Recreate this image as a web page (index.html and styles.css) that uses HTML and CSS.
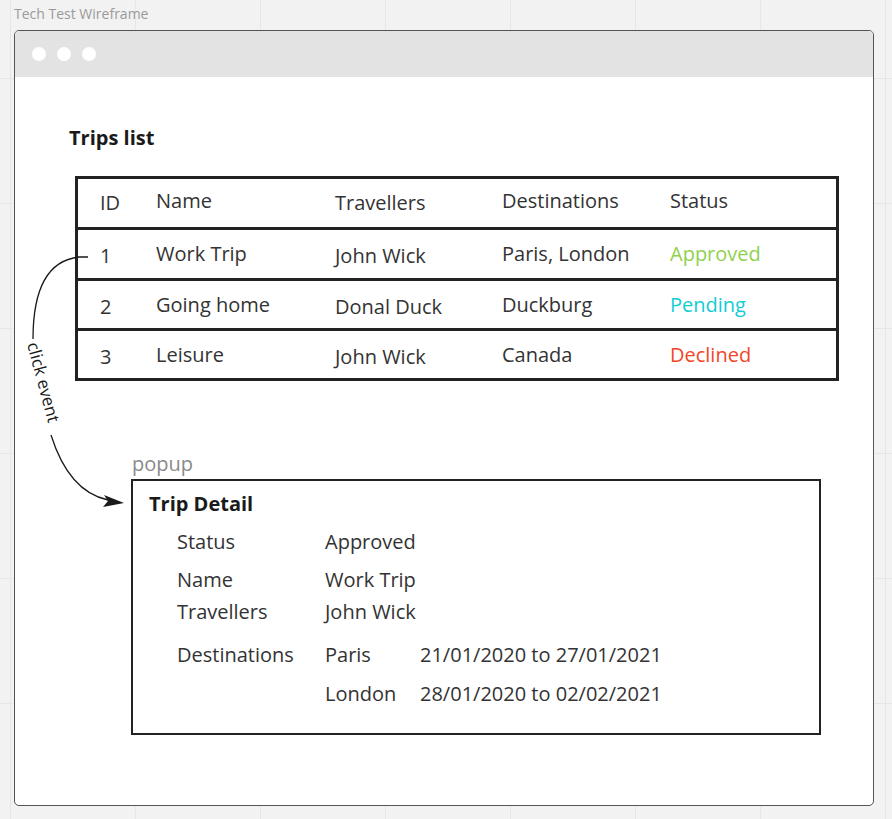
FILE: index.html
```html
<!DOCTYPE html>
<html lang="en">
<head>
    <meta charset="UTF-8">
    <title>Tech Test Wireframe</title>
    <link rel="stylesheet" href="styles.css">
</head>
<body>
    <div class="board-title">Tech Test Wireframe</div>

    <div class="window">
        <div class="title-bar">
            <span class="dot"></span>
            <span class="dot"></span>
            <span class="dot"></span>
        </div>

        <div class="window-body">
            <h1>Trips list</h1>

            <div class="trips">
                <div class="trip-row head">
                    <span class="low">ID</span>
                    <span>Name</span>
                    <span class="low">Travellers</span>
                    <span>Destinations</span>
                    <span>Status</span>
                </div>
                <div class="trip-row">
                    <span class="low">1</span>
                    <span>Work Trip</span>
                    <span class="low">John Wick</span>
                    <span>Paris, London</span>
                    <span class="approved">Approved</span>
                </div>
                <div class="trip-row short">
                    <span class="low">2</span>
                    <span>Going home</span>
                    <span class="low">Donal Duck</span>
                    <span>Duckburg</span>
                    <span class="pending">Pending</span>
                </div>
                <div class="trip-row short">
                    <span class="low">3</span>
                    <span>Leisure</span>
                    <span class="low">John Wick</span>
                    <span>Canada</span>
                    <span class="declined">Declined</span>
                </div>
            </div>

            <div class="popup-label">popup</div>
            <div class="popup">
                <h2>Trip Detail</h2>
                <div class="detail-row first">
                    <span>Status</span>
                    <span>Approved</span>
                </div>
                <div class="detail-row">
                    <span>Name</span>
                    <span>Work Trip</span>
                </div>
                <div class="detail-row tight">
                    <span>Travellers</span>
                    <span>John Wick</span>
                </div>
                <div class="detail-row wide">
                    <span>Destinations</span>
                    <span>Paris</span>
                    <span>21/01/2020 to 27/01/2021</span>
                </div>
                <div class="detail-row">
                    <span></span>
                    <span>London</span>
                    <span>28/01/2020 to 02/02/2021</span>
                </div>
            </div>
        </div>
    </div>

    <!-- connector drawn over the board -->
    <svg class="connector" width="892" height="819" viewBox="0 0 892 819">
        <path d="M88 257 L79 257 C52 260 33 282 33 339" fill="none" stroke="#1a1a1a" stroke-width="1.3"/>
        <text x="0" y="0" transform="translate(27 344) rotate(75)" font-family="Open Sans, sans-serif" font-size="17" fill="#1a1a1a">click event</text>
        <path d="M51 435 C62 470 80 494 108 500" fill="none" stroke="#1a1a1a" stroke-width="1.3"/>
        <path d="M124 503 L104 495 L108 501 L103 507 Z" fill="#1a1a1a"/>
    </svg>
</body>
</html>
```

FILE: styles.css
```css
* {
    margin: 0;
    padding: 0;
    box-sizing: border-box;
}

body {
    font-family: "Open Sans", "Liberation Sans", sans-serif;
    color: #333333;
    background-color: #f2f2f2;
    background-image:
        linear-gradient(to right, #e6e6e6 1px, transparent 1px),
        linear-gradient(to bottom, #e6e6e6 1px, transparent 1px);
    background-size: 125px 125px;
    background-position: 10px 78px;
    width: 892px;
    height: 819px;
    overflow: hidden;
    position: relative;
}

.board-title {
    font-size: 14px;
    line-height: 18px;
    color: #9a9a9a;
    padding: 5px 0 0 14px;
    height: 30px;
}

.window {
    margin-left: 14px;
    width: 860px;
    height: 776px;
    background: #ffffff;
    border: 1.5px solid #555555;
    border-radius: 5px;
    overflow: hidden;
}

.title-bar {
    height: 46px;
    background: #e3e3e3;
    display: flex;
    align-items: center;
    gap: 11px;
    padding-left: 17px;
}

.dot {
    width: 14px;
    height: 14px;
    border-radius: 50%;
    background: #ffffff;
}

.window-body {
    padding: 47px 0 0 0;
}

h1 {
    font-size: 20px;
    font-weight: 700;
    line-height: 28px;
    color: #1a1a1a;
    margin-left: 54px;
    margin-bottom: 24px;
}

/* Trips table */
.trips {
    margin-left: 60px;
    width: 764px;
    border: 3px solid #222222;
    border-bottom: none;
}

.trip-row {
    display: grid;
    grid-template-columns: 55px 179px 167px 168px 1fr;
    align-items: center;
    height: 51px;
    padding-left: 22px;
    border-bottom: 3px solid #222222;
    font-size: 20px;
    line-height: 28px;
}

.trip-row.head {
    padding-bottom: 4px;
}

.trip-row.short {
    height: 50px;
}

.trip-row span:nth-child(n+2) {
    padding-left: 1px;
}

.trip-row .low {
    padding-top: 4px;
}

.approved { color: #8fd14f; }
.pending { color: #12cdd4; }
.declined { color: #f24726; }

/* Popup */
.popup-label {
    margin: 69px 0 1px 117px;
    font-size: 20px;
    line-height: 28px;
    color: #8a8a8a;
}

.popup {
    margin-left: 116px;
    width: 690px;
    height: 256px;
    border: 2px solid #222222;
    padding: 9px 0 0 16px;
}

h2 {
    font-size: 20px;
    font-weight: 700;
    line-height: 28px;
    color: #1a1a1a;
}

.detail-row {
    display: grid;
    grid-template-columns: 148px 95px auto;
    margin-left: 28px;
    margin-top: 10px;
    font-size: 20px;
    line-height: 28px;
}

.detail-row.first { margin-top: 10px; }
.detail-row.tight { margin-top: 4px; }
.detail-row.wide { margin-top: 15px; }
.detail-row:last-child { margin-top: 11px; }

.connector {
    position: absolute;
    left: 0;
    top: 0;
    pointer-events: none;
}
```
